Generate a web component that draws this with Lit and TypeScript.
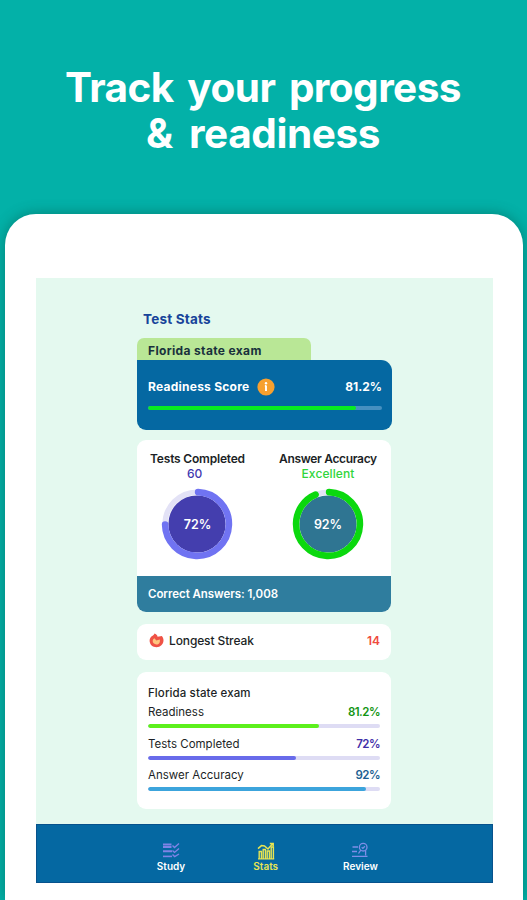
import { LitElement, html, svg, css } from "lit";
import { customElement, property } from "lit/decorators.js";
import { styleMap } from "lit/directives/style-map.js";

@customElement("progress-bar")
class ProgressBar extends LitElement {
  @property({ type: Number }) value = 0;
  @property() color = "#5cf01c";
  @property() track = "#dedcf4";

  static styles = css`
    :host { display: block; height: 4px; }
    .track { height: 100%; border-radius: 2px; overflow: hidden; }
    .fill { height: 100%; border-radius: 2px; }
  `;

  render() {
    return html`<div class="track" style=${styleMap({ background: this.track })}>
      <div class="fill" style=${styleMap({ width: `${this.value}%`, background: this.color })}></div>
    </div>`;
  }
}

@customElement("ring-gauge")
class RingGauge extends LitElement {
  @property({ type: Number }) value = 0;
  @property({ type: Number }) start = 0;
  @property({ type: Number }) sweep = 0;
  @property() color = "";
  @property() disc = "";

  static styles = css`
    :host { display: grid; width: 72px; height: 72px; }
    svg, .value { grid-area: 1 / 1; }
    .value { place-self: center; margin-top: 1px; color: #fff; font: 600 12.5px/16px Inter, sans-serif; letter-spacing: -0.1px; z-index: 1; }
  `;

  render() {
    return html`<svg width="72" height="72" viewBox="0 0 72 72">
        <circle cx="36" cy="36" r="31.8" fill="none" stroke="#e3e2f6" stroke-width="5.5" />
        <circle cx="36" cy="36" r="28.6" fill=${this.disc} />
        ${svg`<circle cx="36" cy="36" r="31.9" fill="none" stroke=${this.color} stroke-width="6.6"
          stroke-linecap="round" pathLength="360" stroke-dasharray="${this.sweep} 360"
          transform="rotate(${this.start - 90} 36 36)" />`}
      </svg>
      <span class="value">${this.value}%</span>`;
  }
}

const studyIcon = svg`<g fill="none" stroke="#7f83e6">
  <path d="M1 2.4h8.5M1 5h8.5M1 9.3h9" stroke-width="2" />
  <path d="M1 14.4h9" stroke-width="1.6" />
  <path d="M10.5 3.6l2 2 4.5-4M10.5 8.4l2 2 4.5-4M10.5 12.4l2.2 2.2 4.3-2.6" stroke-width="1.4" /></g>`;

const statsIcon = svg`<g fill="none" stroke="#e8e552" stroke-width="1.4">
  <path d="M2.2 17V9.5h2.2V17M6.2 17V7.5h2.2V17M10.2 17V9h2.2V17M14.2 17V5h2.2v12" />
  <path d="M1 16.9h16.2" stroke-width="1.2" />
  <path d="M1 6.6l3.5-3 3 .4 3.5 3L15.6 1.8M12.8 1.4h3.4v3" stroke-width="1.5" /></g>`;

const reviewIcon = svg`<g fill="none" stroke="#7f8ee8" stroke-width="1.3">
  <path d="M1.5 5h5.5M1 9.5h5M1 14.4h15.5" />
  <circle cx="12.2" cy="5.2" r="3.8" />
  <path d="M10.7 5.2l1.2 1.2 2-2.2M9.8 8.2L7.5 11.5M14.6 8.2v5.4" /></g>`;

@customElement("app-root")
class AppRoot extends LitElement {
  static styles = css`
    :host {
      display: flex; flex-direction: column; height: 900px; overflow: hidden;
      background: #03b1a8; font-family: Inter, sans-serif; color: #1c1f26;
    }
    * { box-sizing: border-box; }
    h1, h2, h3 { margin: 0; font-weight: inherit; font-size: inherit; }
    svg { display: block; flex: none; }
    .headline {
      height: 214px; padding: 65px 1px 0 0; flex: none; text-align: center; color: #fff;
      font-size: 40.5px; font-weight: 700; line-height: 45.5px; letter-spacing: -0.55px; word-spacing: 4.5px;
    }
    .headline span { display: block; }
    .headline .second { letter-spacing: -0.4px; word-spacing: 7px; }
    .tablet {
      flex: 1; margin: 0 4.5px 0 4.8px; padding: 63.5px 29.5px 17px 31.2px; background: #fff;
      border-radius: 31px 31px 0 0; box-shadow: 0 0 14px rgba(0, 70, 60, .45);
      display: flex; flex-direction: column;
    }
    .screen { flex: 1; background: #e4f9ef; display: flex; flex-direction: column; }
    .content { flex: 1; margin-left: 101px; width: 255px; padding-top: 32.5px; }
    .title { padding-left: 6px; height: 28px; font-size: 13.5px; font-weight: 700; line-height: 19px; letter-spacing: .2px; color: #17449a; }
    .tab {
      width: 174px; height: 22px; padding-left: 11px; border-radius: 7px 7px 0 0; background: #b9e796;
      font-size: 12px; font-weight: 700; line-height: 26px; letter-spacing: .35px; color: #18313c;
    }
    .readiness { height: 70px; padding: 17px 10px 0 11px; border-radius: 0 11px 9px 9px; background: #0568a2; color: #fff; }
    .row { display: flex; align-items: center; }
    .row .end { margin-left: auto; }
    .readiness .row { height: 19px; font-size: 12px; font-weight: 700; margin-bottom: 10px; }
    .readiness .name { letter-spacing: .25px; }
    .info { margin-left: 8px; }
    .card { background: #fff; border-radius: 9px; margin-top: 12px; overflow: hidden; width: 254px; }
    .gauges-card { margin-top: 10px; height: 172px; display: flex; flex-direction: column; }
    .gauges { flex: 1; display: flex; padding-top: 11px; }
    .gauge { flex: none; display: flex; flex-direction: column; align-items: center; font-size: 12px; font-weight: 600; line-height: 15px; }
    .gauge.tests { width: 121px; letter-spacing: -0.2px; }
    .gauge.accuracy { width: 124px; margin-left: 8px; letter-spacing: -0.33px; }
    .gauge ring-gauge { margin-top: 7px; }
    .count { color: #3f38b0; font-weight: 500; padding-right: 6px; }
    .grade { color: #2fd53b; font-weight: 500; letter-spacing: .1px; }
    .footer { height: 36px; padding-left: 11px; background: #2f7d9e; color: #fff; font-size: 11.5px; font-weight: 600; line-height: 36px; letter-spacing: -0.05px; }
    .streak { display: flex; align-items: center; height: 36px; padding: 0 11px 3px 12px; font-size: 12px; font-weight: 500; }
    .streak svg { margin-right: 5px; }
    .streak .label { letter-spacing: -0.12px; }
    .streak .end { margin-left: auto; color: #ef4b3e; font-weight: 600; }
    .details { height: 137px; padding: 12px 11px 0; font-size: 11.5px; line-height: 19px; }
    .details h3 { font-weight: 500; letter-spacing: .1px; }
    .metric { height: 31.6px; }
    .metric .row { height: 19px; margin-bottom: 2px; }
    .metric .end { font-weight: 600; font-size: 11.5px; letter-spacing: -0.5px; }
    .green { color: #129512; }
    .violet { color: #3f2fa8; }
    .blue { color: #1d5f92; }
    .nav {
      height: 59.5px; background: #0568a2; border: 1px solid #07528c;
      display: flex; justify-content: center; padding: 17px 0 0 2.5px;
      font-size: 10px; font-weight: 600; line-height: 12px; color: #fff;
    }
    .nav div { width: 94.7px; display: flex; flex-direction: column; align-items: center; }
    .nav .active { color: #e8e552; }
  `;

  private metric(name: string, value: string, fill: number, tone: string, color: string) {
    return html`<div class="metric">
      <div class="row"><span class="name">${name}</span><span class="end ${tone}">${value}</span></div>
      <progress-bar .value=${fill} .color=${color}></progress-bar>
    </div>`;
  }

  private tab(name: string, icon: unknown, active = false) {
    return html`<div class=${active ? "active" : ""}>
      <svg width="18" height="18" viewBox="0 0 18 18">${icon}</svg><span>${name}</span>
    </div>`;
  }

  render() {
    return html`
      <h1 class="headline"><span>Track your progress</span><span class="second">&amp; readiness</span></h1>
      <main class="tablet">
        <div class="screen">
          <div class="content">
            <h2 class="title">Test Stats</h2>
            <div class="tab">Florida state exam</div>
            <section class="readiness">
              <div class="row">
                <span class="name">Readiness Score</span>
                <svg class="info" width="18" height="18" viewBox="0 0 18 18">
                  <circle cx="9" cy="9" r="8.6" fill="#f7a02f" />
                  <circle cx="9" cy="5.3" r="1.2" fill="#fff" />
                  <path d="M9 7.4v5.6M7.9 8h1" fill="none" stroke="#fff" stroke-width="1.9" />
                </svg>
                <span class="end">81.2%</span>
              </div>
              <progress-bar .value=${88.7} .color=${"#08ec22"} .track=${"#4790c0"}></progress-bar>
            </section>
            <section class="card gauges-card">
              <div class="gauges">
                <div class="gauge tests">
                  <span>Tests Completed</span><span class="count">60</span>
                  <ring-gauge .value=${72} .start=${2} .sweep=${267} .color=${"#7073f2"} .disc=${"#443eae"}></ring-gauge>
                </div>
                <div class="gauge accuracy">
                  <span>Answer Accuracy</span><span class="grade">Excellent</span>
                  <ring-gauge .value=${92} .start=${2} .sweep=${335} .color=${"#0bd80e"} .disc=${"#2f7592"}></ring-gauge>
                </div>
              </div>
              <div class="footer">Correct Answers: 1,008</div>
            </section>
            <section class="card streak">
              <svg width="15" height="15" viewBox="0 0 15 15">
                <path d="M5.4.6C7.2 1 8.2 2.2 8.6 3.8L12.8 3C14 4.4 14.6 6 14.5 7.6C14.3 11.6 11.4 14.2 7.5 14.2C3.6 14.2.6 11.6.6 7.8C.6 5.4 1.8 3.6 3.6 2.8C4.6 2.4 5.2 1.6 5.4.6Z" fill="#ef5245" />
                <path d="M5.4 5.2L7.4 7.6L10.8 6.4C11.4 9.4 9.9 11.4 7.5 11.4C5.1 11.4 3.5 9.8 3.7 7.8C3.8 6.6 4.6 5.8 5.4 5.2Z" fill="#ffc57e" />
              </svg>
              <span class="label">Longest Streak</span><span class="end">14</span>
            </section>
            <section class="card details">
              <h3>Florida state exam</h3>
              ${this.metric("Readiness", "81.2%", 73.7, "green", "#5cf01c")}
              ${this.metric("Tests Completed", "72%", 63.8, "violet", "#686bea")}
              ${this.metric("Answer Accuracy", "92%", 93.8, "blue", "#3ca4dc")}
            </section>
          </div>
          <nav class="nav">
            ${this.tab("Study", studyIcon)}${this.tab("Stats", statsIcon, true)}${this.tab("Review", reviewIcon)}
          </nav>
        </div>
      </main>
    `;
  }
}
